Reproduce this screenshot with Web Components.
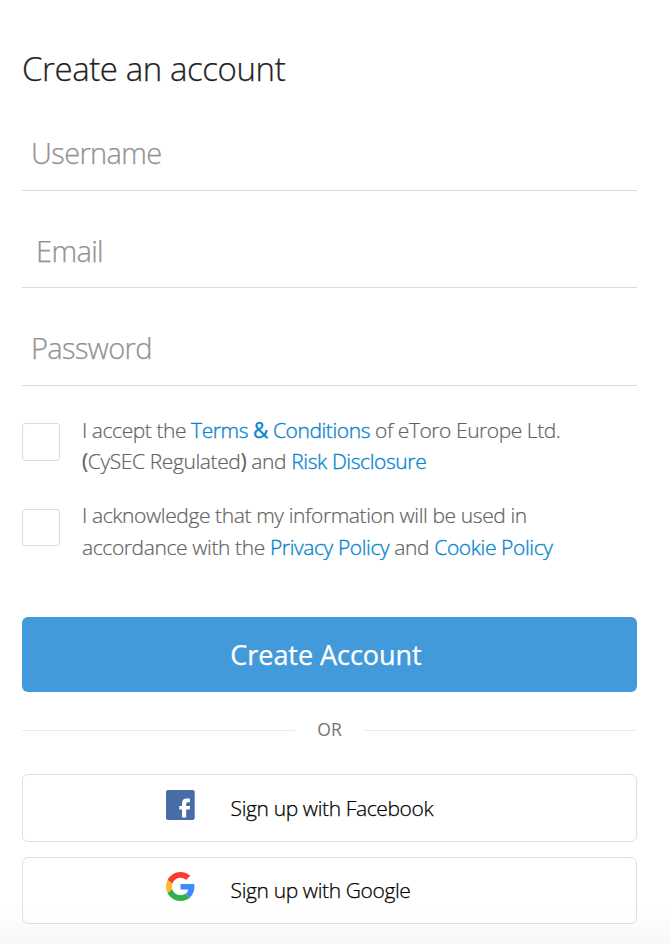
<!DOCTYPE html>
<html lang="en"><head><meta charset="utf-8"><title>Create an account</title>
<style>
body{margin:0;background:#fff;font-family:"Open Sans",sans-serif;font-weight:300;color:#222}
</style></head><body>
<sign-up-form></sign-up-form>
<script>
const define=(name,html)=>customElements.define(name,class extends HTMLElement{
  constructor(){super();this.attachShadow({mode:'open'}).innerHTML=html;}
});
define('text-field',`<style>
:host{display:block;box-sizing:border-box;height:97.5px;border-bottom:1px solid #d8dadb;color:#929292;font-size:29px;line-height:40px;padding:40px 0 0 var(--inset,9px);letter-spacing:-.62px;-webkit-text-stroke:.25px}
</style><slot></slot>`);
define('text-link',`<style>:host{color:#0a84cf;letter-spacing:var(--link-track,-.39px);-webkit-text-stroke:.35px}</style><slot></slot>`);
define('consent-row',`<style>
:host{display:flex;gap:22px;font-size:21px;line-height:31.5px;color:#626262;letter-spacing:-.39px;-webkit-text-stroke:.2px}
.box{box-sizing:border-box;flex:none;width:38px;height:var(--box-height,38px);margin-top:var(--box-top,8px);border:1px solid #dcdcdc;border-radius:3px}
.copy{white-space:nowrap}
::slotted(b){font-weight:400}
</style><div class="box"></div><div class="copy"><slot></slot></div>`);
define('primary-button',`<style>
:host{display:flex;justify-content:center;box-sizing:border-box;height:75px;padding:18px 7px 0 0;background:#439ada;border-radius:6px;color:#fff;font-size:27px;line-height:40px;font-weight:400;letter-spacing:-.04px;-webkit-text-stroke:.25px}
</style><slot></slot>`);
define('or-divider',`<style>
:host{display:flex;align-items:center;gap:21px;height:24px;font-size:17.500px;line-height:24px;color:#747474;font-weight:400}
i{flex:1;height:1px;margin-top:1px;background:#eaebeb}
span{margin-top:-1px;width:27px;text-align:center}
</style><i></i><span><slot></slot></span><i></i>`);
define('social-button',`<style>
:host{display:flex;box-sizing:border-box;height:68px;border:1px solid #dedfdf;border-radius:6px;padding:15px 0 0 143px;gap:35.600px;color:#000;font-size:21px;line-height:36px;letter-spacing:-.38px;-webkit-text-stroke:.25px}
</style><slot name="icon"></slot><span><slot></slot></span>`);
define('sign-up-form',`<style>
:host{display:block;box-sizing:border-box;width:670px;height:944px;padding:46px 33px 0 22px;background:linear-gradient(#fff0,#fff0 905px,#f8f8f8)}
h1{margin:0;font-size:33px;line-height:46px;font-weight:300;color:#222;letter-spacing:-.42px;-webkit-text-stroke:.25px}
text-field:first-of-type{margin-top:1px}
consent-row{margin-top:29px}
consent-row+consent-row{margin-top:22.500px;--box-height:37px;--box-top:9px}
primary-button{margin-top:53.500px}
or-divider{margin-top:26px}
social-button{margin-top:15px}
or-divider+social-button{margin-top:32px}
social-button:last-of-type{height:67px;padding-top:14px}
svg{stroke:none;-webkit-text-stroke:0}
.google{margin-top:.5px}
</style>
<h1>Create an account</h1>
<text-field>Username</text-field><text-field style="--inset:14px">Email</text-field><text-field>Password</text-field>
<consent-row><span style="letter-spacing:-.44px">I accept the <text-link style="--link-track:-.42px">Terms <b style="font-weight:500">&amp;</b> Conditions</text-link> of eToro Europe Ltd.</span><br><b>(</b>CySEC Regulated<b>)</b> and <text-link>Risk Disclosure</text-link></consent-row>
<consent-row>I acknowledge that my information will be used in<br>accordance with the <text-link>Privacy Policy</text-link> and <text-link>Cookie Policy</text-link></consent-row>
<primary-button>Create Account</primary-button>
<or-divider>OR</or-divider>
<social-button><svg slot="icon" width="29" height="30" viewBox="0 0 29 30"><rect width="28.700" height="30" rx="2" fill="#486ca6"/><path d="M16 27.500V19.500h-2.700v-3.600H16v-2.400Q16 8.500 20.500 8.500h3.400v3.700h-2.200q-1.500 0-1.500 1.500v2.200h3.900l-.5 3.600h-3.400v8z" fill="#fff"/></svg>Sign up with Facebook</social-button>
<social-button><svg class="google" slot="icon" width="29" height="29" viewBox="0 0 48 48"><path fill="#ff3b30" d="M24 0c6.470 0 11.900 2.380 16.060 6.250l-6.850 6.850C30.710 10.720 27.540 9.500 24 9.500c-6.260 0-11.570 4.220-13.460 9.910l-7.980-6.190C6.510 5.380 14.620 0 24 0z"/><path fill="#3d8bff" d="M46.980 24.550c0-1.570-.15-3.090-.38-4.550H24v9.020h12.940c-.58 2.960-2.260 5.480-4.780 7.180l7.730 6c4.510-4.180 7.090-10.360 7.090-17.650z"/><path fill="#ffb92e" d="M10.530 28.590c-.48-1.450-.76-2.990-.76-4.590s.27-3.140.76-4.590l-7.980-6.190C.92 16.460 0 20.120 0 24c0 3.880.92 7.540 2.560 10.780z"/><path fill="#2fb14c" d="M24 48c6.480 0 11.930-2.130 15.890-5.810l-7.730-6c-2.150 1.450-4.920 2.300-8.160 2.300-6.260 0-11.570-4.220-13.470-9.910l-7.980 6.190C6.510 42.620 14.620 48 24 48z"/></svg>Sign up with Google</social-button>`);
</script></body></html>
